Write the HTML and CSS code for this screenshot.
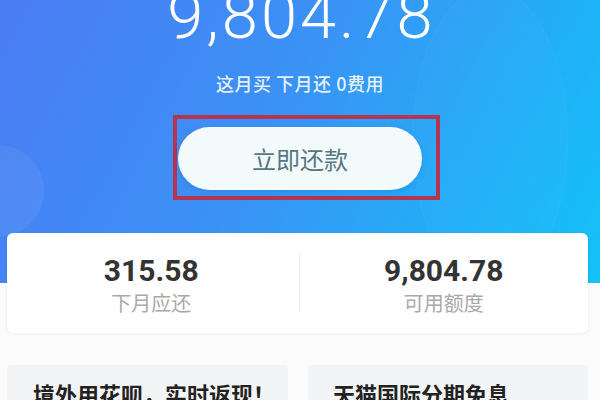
FILE: index.html
```html
<!DOCTYPE html>
<html lang="zh-CN">
<head>
<meta charset="utf-8">
<title>花呗</title>
<link rel="stylesheet" href="styles.css">
</head>
<body>
<div class="page">
  <section class="hero">
    <span class="deco deco-left"></span>
    <span class="deco deco-right"></span>
    <div class="amount">9,804.78</div>
    <div class="tagline">这月买 下月还 0费用</div>
    <div class="highlight">
      <button class="pay-btn">立即还款</button>
    </div>
  </section>
  <section class="summary">
    <div class="stat">
      <div class="stat-num">315.58</div>
      <div class="stat-label">下月应还</div>
    </div>
    <div class="divider"></div>
    <div class="stat">
      <div class="stat-num">9,804.78</div>
      <div class="stat-label">可用额度</div>
    </div>
  </section>
  <section class="promos">
    <div class="promo">境外用花呗，实时返现！</div>
    <div class="promo">天猫国际分期免息</div>
  </section>
</div>
</body>
</html>
```

FILE: styles.css
```css
* { box-sizing: border-box; }
html, body {
  margin: 0;
  padding: 0;
  width: 600px;
  height: 400px;
  overflow: hidden;
  background: #fbfbfb;
  font-family: Roboto, "Noto Sans CJK SC", sans-serif;
}
.page {
  display: flex;
  flex-direction: column;
}
.hero {
  position: relative;
  height: 283px;
  overflow: hidden;
  display: flex;
  flex-direction: column;
  align-items: center;
  background: linear-gradient(118deg, #4b7bf4 0%, #3b92f5 45%, #22aef7 75%, #14c2f8 100%);
  color: #fff;
}
.deco {
  position: absolute;
  border-radius: 50%;
}
.deco-left {
  left: -48px;
  top: 145px;
  width: 92px;
  height: 92px;
  background: rgba(255, 255, 255, 0.06);
}
.deco-right {
  left: 412px;
  top: -12px;
  width: 156px;
  height: 300px;
  background: rgba(255, 255, 255, 0.02);
  border: 1px solid rgba(255, 255, 255, 0.035);
}
.amount {
  position: relative;
  margin-top: -16px;
  font-family: Roboto, sans-serif;
  font-weight: 300;
  font-size: 65px;
  line-height: 64px;
  letter-spacing: 3px;
  padding-left: 3px;
}
.tagline {
  position: relative;
  margin-top: 25px;
  font-family: "Noto Sans CJK SC", sans-serif;
  font-weight: 500;
  font-size: 18px;
  line-height: 20px;
  color: rgba(255, 255, 255, 0.88);
  letter-spacing: 0.5px;
}
.highlight {
  position: relative;
  margin-top: 22px;
  margin-left: 13px;
  border: 4px solid #b5344f;
  padding: 8px 14px 6px 1px;
}
.pay-btn {
  display: block;
  width: 244px;
  height: 63px;
  border: none;
  border-radius: 32px;
  background: #f3fafc;
  color: #567682;
  font-family: "Noto Sans CJK SC", sans-serif;
  font-size: 24px;
  padding: 0;
  box-shadow: 0 2px 6px rgba(0, 60, 120, 0.12);
}
.summary {
  position: relative;
  margin: -50px 12px 0 7px;
  height: 100px;
  background: #fff;
  border-radius: 6px;
  box-shadow: 0 1px 4px rgba(0, 0, 0, 0.06);
  display: flex;
  align-items: flex-start;
}
.stat {
  flex: 1;
  display: flex;
  flex-direction: column;
  align-items: center;
  padding-top: 23px;
}
.stat-num {
  font-family: Roboto, sans-serif;
  font-weight: 700;
  font-size: 30px;
  line-height: 30px;
  color: #333;
}
.stat-label {
  margin-top: 5px;
  font-family: "Noto Sans CJK SC", sans-serif;
  font-size: 20px;
  line-height: 24px;
  color: #a9a9a9;
}
.divider {
  align-self: center;
  width: 1px;
  height: 60px;
  background: #eeeeee;
  margin-left: 3px;
}
.promos {
  margin: 32px 12px 0 7px;
  display: flex;
  gap: 20px;
}
.promo {
  flex: 1;
  height: 60px;
  background: #f3f4f5;
  border-radius: 4px;
  padding: 13px 0 0 25px;
  font-family: "Noto Sans CJK SC", sans-serif;
  font-weight: 700;
  font-size: 22px;
  line-height: 30px;
  color: #222;
  white-space: nowrap;
}
.promo:first-child {
  padding-left: 26px;
}
```
